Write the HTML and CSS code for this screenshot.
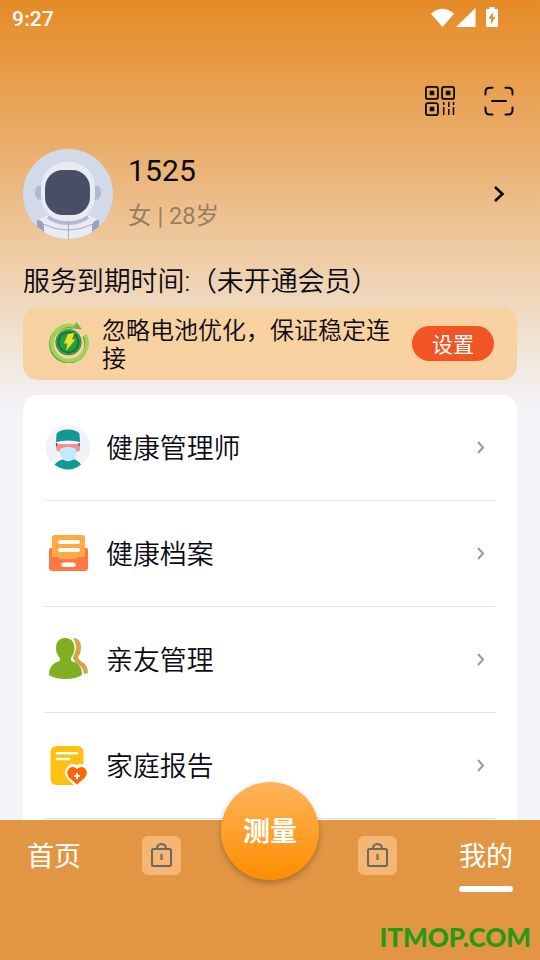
FILE: index.html
```html
<!DOCTYPE html>
<html lang="zh-CN">
<head>
<meta charset="utf-8">
<title>我的</title>
<link rel="stylesheet" href="styles.css">
</head>
<body>
<div class="screen">
  <header class="status">
    <span class="clock">9:27</span>
    <svg class="status-icons" width="68" height="22" viewBox="0 0 68 22" fill="#fff">
      <path d="M0 5.800Q11.500-4.200 23 5.800L11.500 19Z"/>
      <path d="M44.500 0V19H25Z"/>
      <path fill-rule="evenodd" d="M58.500-1h5v2h2.500q1 0 1 1v16q0 1-1 1H56q-1 0-1-1V2q0-1 1-1h2.500ZM61.800 4L57.500 10.700H60.200L59.800 16.500L64.500 9H61.800Z"/>
    </svg>
  </header>
  <div class="tools">
    <svg width="30" height="30" viewBox="0 0 30 30" fill="none" stroke="#0a0a12" stroke-width="1.800">
      <rect x=".9" y=".9" width="12" height="12" rx="2"/><rect x="17.100" y=".9" width="12" height="12" rx="2"/><rect x=".9" y="17.100" width="12" height="12" rx="2"/>
      <path d="M4.700 7h4.600M20.800 7h4.600M4.700 23h4.600" stroke-width="4.600"/>
      <path d="M18.700 16v3M18.700 21V29M23.800 16v5M23.800 23v6M28.500 16v3M28.500 21v8" stroke-width="1.500"/>
    </svg>
    <svg width="30" height="30" viewBox="0 0 30 30" fill="none" stroke="#0a0a12" stroke-width="2" stroke-linecap="round">
      <path d="M1.500 8.500V6Q1.500 1.800 6 1.800H8.500M21.500 1.800H24Q28.500 1.800 28.500 6V8.500M28.500 21.500V24Q28.500 28.500 24 28.500H21.500M8.500 28.500H6Q1.500 28.500 1.500 24V21.500M8 15H22"/>
    </svg>
  </div>
  <section class="profile">
    <svg width="90" height="90" viewBox="0 0 90 90">
      <defs><clipPath id="face"><circle cx="45" cy="45" r="45"/></clipPath></defs>
      <g clip-path="url(#face)">
        <rect width="90" height="90" fill="#d2d9e9"/>
        <rect x="12" y="36" width="14" height="15" rx="6" fill="#b3b9cf"/><rect x="64" y="36" width="14" height="15" rx="6" fill="#b3b9cf"/>
        <path d="M14 74Q18 66 30 66H60Q72 66 76 74V90H14Z" fill="#e8ebf4"/>
        <path d="M14 71q7 0 7 7v12h-7ZM76 71q-7 0-7 7v12h7Z" fill="#99a1b8"/>
        <path d="M25 68Q33 74 45 74T65 68" fill="none" stroke="#b3b9cf" stroke-width="4"/>
        <path d="M20 75Q32 81 45 81T70 75M45.500 72V90" fill="none" stroke="#a3abc0" stroke-width="1"/>
        <rect x="18" y="13" width="54" height="59" rx="25" fill="#e8ebf4"/>
        <rect x="22" y="21" width="45" height="45" rx="18" fill="#484f64"/>
      </g>
    </svg>
    <div class="who"><div class="name">1525</div><div class="meta">女 | 28岁</div></div>
    <svg class="more" width="12" height="18" viewBox="0 0 12 18" fill="none" stroke="#0a0a12" stroke-width="2.600"><path d="M2 2L9.500 9L2 16"/></svg>
  </section>
  <div class="expiry">服务到期时间:（未开通会员）</div>
  <section class="notice">
    <svg class="battery" width="42" height="42" viewBox="0 0 42 42">
      <defs><radialGradient id="disc"><stop offset="0" stop-color="#2aa444"/><stop offset=".65" stop-color="#229b3e"/><stop offset=".8" stop-color="#126b27"/><stop offset=".9" stop-color="#39b550"/><stop offset="1" stop-color="#176b29"/></radialGradient></defs>
      <path d="M25.500 5A17.600 17.600 0 1 0 37 14" transform="translate(-.7 .9)" fill="none" stroke="#57913a" stroke-width="3.800"/>
      <path d="M25.500 5A17.600 17.600 0 1 0 37 14" fill="none" stroke="#9bd456" stroke-width="3.800"/>
      <path d="M28.500 1L34 8.500L24 7.500Z" fill="#79b448"/>
      <circle cx="20.500" cy="21.300" r="13" fill="url(#disc)"/>
      <path d="M20 13L26.500 12L24 18.500H27.500L18 30L19.500 22.500H16Z" fill="#f0df22"/>
    </svg>
    <p>忽略电池优化，保证稳定连接</p>
    <button>设置</button>
  </section>
  <main class="menu">
    <div class="row">
      <svg width="46" height="46" viewBox="0 0 46 46">
        <circle cx="23" cy="23" r="22.500" fill="#f1f3f9"/>
        <path d="M11 20h24v6q-2 3-5 1L23 36L16 27q-4 2-5-3Z" fill="#f7918e"/>
        <path d="M11 18L11.500 10Q14 5.500 23 5.500T34.500 10L35 18Q30 16.500 23 16.500T11 18Z" fill="#129895"/>
        <path d="M18 33h11v5H18Z" fill="#d8f0fd"/>
        <path d="M9.500 40.500Q14 36 18 35.500Q23 39 28 35.500Q33 36 36 40.500Q30 45.500 23 45.500T9.500 40.500Z" fill="#129895"/>
        <path d="M15 25Q23 21 31 25V31Q28 36 23 36T15 31Z" fill="#c1eaff"/>
        <path d="M11.500 19v3M34 19v3" stroke="#364b63" stroke-width="1.200"/>
        <path d="M28 34l4 2" stroke="#a4d0ec"/>
      </svg>
      <span>健康管理师</span><svg class="arrow" viewBox="0 0 8 13"><path d="M1 1L6 6.500L1 12"/></svg>
    </div>
    <div class="row">
      <svg width="46" height="46" viewBox="0 0 46 46">
        <path d="M4 20q0-2 2-2H41q2 0 2 2V38q0 3-3 3H7q-3 0-3-3Z" fill="#ff7745"/>
        <path d="M7 27V8q0-3 3-3H37q3 0 3 3V27H33Q32 29 30 29H16Q14 29 13 27Z" fill="#ffaa42"/>
        <path d="M15 12H33M15 20H33" stroke="#fff" stroke-width="4" stroke-linecap="round"/><path d="M18.500 34.700H28.500" stroke="#fff" stroke-width="4.600" stroke-linecap="round"/>
      </svg>
      <span>健康档案</span><svg class="arrow" viewBox="0 0 8 13"><path d="M1 1L6 6.500L1 12"/></svg>
    </div>
    <div class="row">
      <svg width="46" height="46" viewBox="0 0 46 46">
        <path d="M28 2Q36 2 36 11Q36 17 33 21Q33 23 37 26Q43 29 43 37L39 38Q38 31 33 28Q28 25 28 21Q31 15 31 11Q31 6 28 2Z" fill="#d4a343"/>
        <path d="M20 2C26 2 29.500 6 29.500 12C29.500 17 27 20 26 22Q25 25 29 26C35 28 37 32 37 39Q31 43 20.500 43T4 39C4 32 7 28 12 26Q16 25 15 22C13 20 11 17 11 12C11 6 14 2 20 2Z" fill="#80b022"/>
      </svg>
      <span>亲友管理</span><svg class="arrow" viewBox="0 0 8 13"><path d="M1 1L6 6.500L1 12"/></svg>
    </div>
    <div class="row">
      <svg width="46" height="46" viewBox="0 0 46 46">
        <rect x="5.500" y="4" width="33" height="39" rx="6" fill="#ffc012"/>
        <path d="M12 11.300H32M12 17H24" stroke="#fff" stroke-width="2.600" stroke-linecap="round"/>
        <path d="M32 42L25 35Q21 30 25 26.500Q29 23 32 27Q36 23 40 26.500Q44 31 39 35Z" fill="#ff6505" stroke="#fff" stroke-width="6"/>
        <path d="M32 42.500L24 35.500Q20.500 30.500 24 26.500Q28.500 23.500 32 27Q36 23.500 40 26.500Q43.500 30.500 40 35.500Z" fill="#ff6505"/>
        <path d="M32 31v6M29 34h6" stroke="#fff" stroke-width="2"/>
      </svg>
      <span>家庭报告</span><svg class="arrow" viewBox="0 0 8 13"><path d="M1 1L6 6.500L1 12"/></svg>
    </div>
  </main>
  <nav class="tabs">
    <div class="tab">首页</div>
    <div class="tab"><div class="bag"><svg width="23" height="25" viewBox="0 0 23 25" fill="none" stroke="#6b6763" stroke-width="2"><rect x="2" y="7" width="19" height="17" rx="1.500"/><path d="M7 7Q7 2 11.500 2T16 7M11.500 12V18"/></svg></div></div>
    <div class="tab"></div>
    <div class="tab"><div class="bag"><svg width="23" height="25" viewBox="0 0 23 25" fill="none" stroke="#6b6763" stroke-width="2"><rect x="2" y="7" width="19" height="17" rx="1.500"/><path d="M7 7Q7 2 11.500 2T16 7M11.500 12V18"/></svg></div></div>
    <div class="tab active">我的</div>
    <button class="measure">测量</button>
    <div class="mark">ITMOP.COM</div>
  </nav>
</div>
</body>
</html>
```
FILE: styles.css
```css
* { box-sizing: border-box; }
body { margin: 0; font-family: Roboto, "Noto Sans CJK SC", sans-serif; color: #0a0a12; }
svg { display: block; flex: none; }
button { border: 0; padding: 0; font-family: inherit; color: #fff; }
.screen { height: 960px; overflow: hidden; display: flex; flex-direction: column; background: linear-gradient(#e58b27 0, #e9ac69 140px, #eecba2 250px, #f3f4f8 410px); }
.status { height: 38px; flex: none; display: flex; justify-content: space-between; align-items: center; padding: 0 41px 0 12px; }
.clock { color: #fff; font-size: 21px; font-weight: 500; letter-spacing: .2px; }
.status-icons { margin-top: -1px; overflow: visible; }
.tools { height: 111px; flex: none; display: flex; justify-content: flex-end; gap: 29px; padding: 48px 26px 0 0; }
.profile { height: 90px; flex: none; display: flex; padding: 0 35px 0 23px; }
.who { flex: 1; padding-left: 15px; }
.name { font-size: 30px; line-height: 44px; letter-spacing: .1px; }
.meta { font-size: 23.600px; line-height: 46px; color: #997c61; }
.more { margin-top: 36px; }
.expiry, .notice p, .row span { font-family: Roboto, "Noto Sans CJK SC DemiLight", "Noto Sans CJK SC", sans-serif; font-weight: 350; }
.expiry { flex: none; height: 68px; padding: 23px 23px 0; font-size: 27px; letter-spacing: -.1px; line-height: 40px; white-space: nowrap; }
.notice { height: 73px; flex: none; margin: 0 23px; padding: 0 23px 0 25px; border-radius: 15px; background: #f7d1a0; display: flex; align-items: center; }
.battery { margin: -3px 0 0 0; }
.notice p { width: 290px; margin: 0 20px 0 12px; padding-top: 2px; font-size: 24px; line-height: 28px; }
.notice button { width: 82px; height: 35px; padding-top: 3px; border-radius: 18px; background: #f25424; font-size: 21px; line-height: 32px; }
.menu { flex: 1; min-height: 0; overflow: hidden; margin: 15px 23px 0; padding: 0 22px; border-radius: 15px 15px 0 0; background: #fff; }
.row { height: 106px; padding-bottom: 2px; border-bottom: 1px solid #dfe1e2; display: flex; align-items: center; font-size: 26.900px; }
.row span { flex: 1; margin-left: 15px; }
.arrow { width: 8px; height: 13px; margin: 2px 10px 0 0; fill: none; stroke: #999; stroke-width: 2; }
.tabs { position: relative; height: 140px; flex: none; display: flex; background: #e29644; }
.tab { flex: 1; height: 72px; display: flex; flex-direction: column; align-items: center; padding-top: 17px; font-size: 27px; line-height: 40px; color: #fff; }
.bag { width: 39px; height: 39px; margin: -1px 2px 0 0; border-radius: 6px; background: #f5b573; display: flex; justify-content: center; padding-top: 6px; }
.active::after { content: ""; width: 54px; height: 6px; margin-top: 9px; border-radius: 3px; background: #fff; }
.measure { position: absolute; left: 221px; top: -38px; width: 98px; height: 98px; padding-bottom: 4px; border-radius: 50%; background: linear-gradient(#ffb45c, #ff8d00); box-shadow: 0 3px 6px #0004; font-size: 27px; font-weight: 700; }
.mark { position: absolute; right: 9px; bottom: 5px; color: #279914; font: 900 26px/36px Lato, sans-serif; }
```
